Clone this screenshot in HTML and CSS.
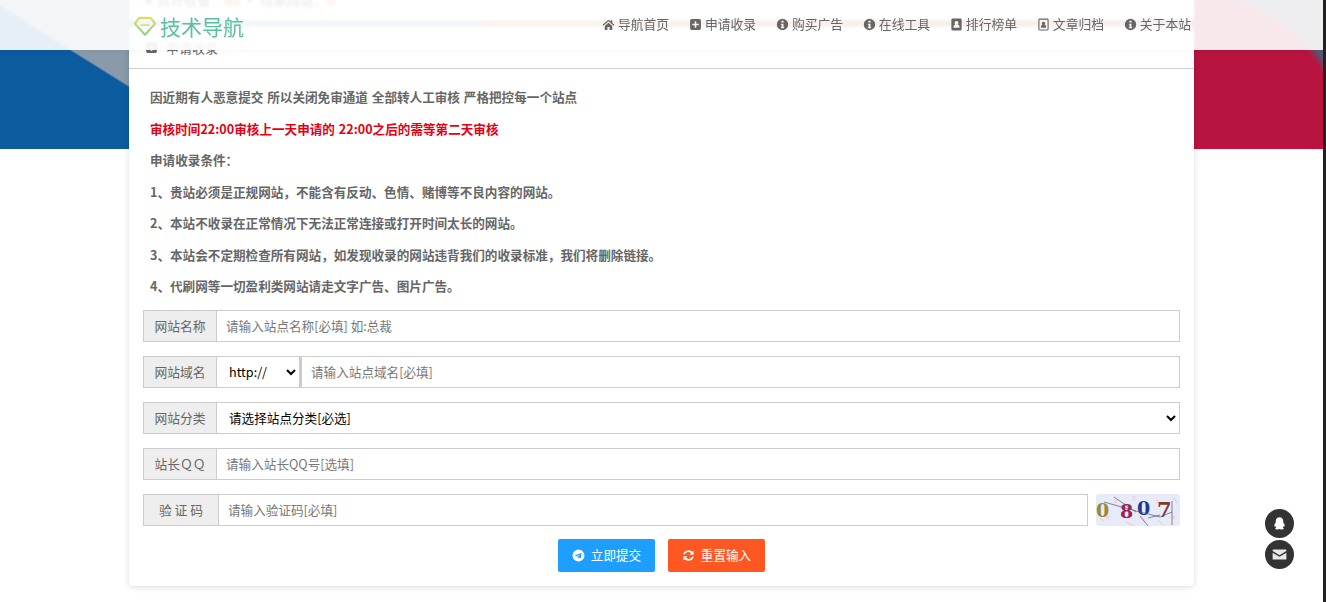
FILE: index.html
```html
<!DOCTYPE html>
<html lang="zh-CN">
<head>
<meta charset="utf-8">
<title>申请收录 - 技术导航</title>
<link rel="stylesheet" href="styles.css">
</head>
<body>
<header class="topbar">
  <a class="logo" href="#">
    <svg class="logo-mark" viewBox="0 0 24 22" width="24" height="21" aria-hidden="true">
      <defs><linearGradient id="gem" x1="0" y1="0" x2="0" y2="1"><stop offset="0" stop-color="#e3dc5e"/><stop offset="1" stop-color="#84d08f"/></linearGradient></defs>
      <path d="M6 2h12l4.600 6L12 19.600 1.400 8z" fill="none" stroke="url(#gem)" stroke-width="2.200" stroke-linejoin="round"/>
      <path d="M7 9.500h10" stroke="#d5d878" stroke-width="1.600"/>
    </svg>
    <span class="logo-text">技术导航</span>
  </a>
  <nav class="nav">
    <a class="nav-item" href="#"><svg class="ico" viewBox="0 0 24 24"><path d="M12 3 1 12.500l1.500 1.700L12 6l9.500 8.200 1.500-1.700-4-3.500V4h-3v2.400zM5 14.800V22h5v-5.500h4V22h5v-7.200L12 8.800z"/></svg>导航首页</a>
    <a class="nav-item" href="#"><svg class="ico" viewBox="0 0 24 24"><path fill-rule="evenodd" d="M5 2h14a3 3 0 0 1 3 3v14a3 3 0 0 1-3 3H5a3 3 0 0 1-3-3V5a3 3 0 0 1 3-3zm5.500 4v4.500H6v3h4.500V18h3v-4.500H18v-3h-4.500V6z"/></svg>申请收录</a>
    <a class="nav-item" href="#"><svg class="ico" viewBox="0 0 24 24"><path fill-rule="evenodd" d="M12 1.500a10.500 10.500 0 1 1 0 21 10.500 10.500 0 0 1 0-21zM10 5v3.500h4V5zM9 10.500v2h1.200V17H9v2h6v-2h-1.200v-6.500z"/></svg>购买广告</a>
    <a class="nav-item" href="#"><svg class="ico" viewBox="0 0 24 24"><path fill-rule="evenodd" d="M12 1.500a10.500 10.500 0 1 1 0 21 10.500 10.500 0 0 1 0-21zM10 5v3.500h4V5zM9 10.500v2h1.200V17H9v2h6v-2h-1.200v-6.500z"/></svg>在线工具</a>
    <a class="nav-item" href="#"><svg class="ico" viewBox="0 0 24 24"><path fill-rule="evenodd" d="M5 1h14a2.500 2.500 0 0 1 2.500 2.500v17A2.500 2.500 0 0 1 19 23H5a2.500 2.500 0 0 1-2.500-2.500v-17A2.500 2.500 0 0 1 5 1zm7 4.500a3.500 3.500 0 0 0-2 6.400c-2.200.5-3.500 2-3.500 4.600V18h11v-1.500c0-2.600-1.300-4.100-3.500-4.600a3.500 3.500 0 0 0-2-6.400z"/></svg>排行榜单</a>
    <a class="nav-item" href="#"><svg class="ico" viewBox="0 0 24 24"><path fill-rule="evenodd" d="M5 1h14a2.500 2.500 0 0 1 2.500 2.500v17A2.500 2.500 0 0 1 19 23H5a2.500 2.500 0 0 1-2.500-2.500v-17A2.500 2.500 0 0 1 5 1zm0 2a.5.5 0 0 0-.5.5v17a.5.5 0 0 0 .5.5h14a.5.5 0 0 0 .5-.5v-17A.5.5 0 0 0 19 3zm7 4a3 3 0 0 1 1.800 5.400c1.800.5 3 1.800 3 4.100V18H7.200v-1.500c0-2.300 1.200-3.600 3-4.100A3 3 0 0 1 12 7z"/></svg>文章归档</a>
    <a class="nav-item" href="#"><svg class="ico" viewBox="0 0 24 24"><path fill-rule="evenodd" d="M12 1.500a10.500 10.500 0 1 1 0 21 10.500 10.500 0 0 1 0-21zM10 5v3.500h4V5zM9 10.500v2h1.200V17H9v2h6v-2h-1.200v-6.500z"/></svg>关于本站</a>
  </nav>
</header>

<div class="hero"></div>

<main class="main">
  <section class="card stats">
    <svg class="ico stats-star" viewBox="0 0 24 24"><path d="m12 1.500 3.200 7 7.600.8-5.700 5.100 1.600 7.500L12 18.100l-6.700 3.800 1.600-7.500-5.700-5.100 7.600-.8z"/></svg>
    <span>共计收录：</span><b class="num">48</b><span> • 待审网站：</span><b class="num">0</b>
  </section>

  <section class="card panel">
    <h2 class="panel-head"><svg class="ico" viewBox="0 0 24 24"><path fill-rule="evenodd" d="M5 2h14a3 3 0 0 1 3 3v14a3 3 0 0 1-3 3H5a3 3 0 0 1-3-3V5a3 3 0 0 1 3-3zm5.500 4v4.500H6v3h4.500V18h3v-4.500H18v-3h-4.500V6z"/></svg>申请收录</h2>
    <div class="panel-body">
      <div class="notes">
        <p>因近期有人恶意提交 所以关闭免审通道 全部转人工审核 严格把控每一个站点</p>
        <p class="red">审核时间22:00审核上一天申请的 22:00之后的需等第二天审核</p>
        <p>申请收录条件：</p>
        <p>1、贵站必须是正规网站，不能含有反动、色情、赌博等不良内容的网站。</p>
        <p>2、本站不收录在正常情况下无法正常连接或打开时间太长的网站。</p>
        <p>3、本站会不定期检查所有网站，如发现收录的网站违背我们的收录标准，我们将删除链接。</p>
        <p>4、代刷网等一切盈利类网站请走文字广告、图片广告。</p>
      </div>
      <form class="form">
        <div class="row">
          <label class="addon">网站名称</label>
          <input class="field" type="text" placeholder="请输入站点名称[必填] 如:总裁">
        </div>
        <div class="row">
          <label class="addon">网站域名</label>
          <select class="field proto"><option>http://</option><option>https://</option></select>
          <input class="field" type="text" placeholder="请输入站点域名[必填]">
        </div>
        <div class="row">
          <label class="addon">网站分类</label>
          <select class="field"><option>请选择站点分类[必选]</option></select>
        </div>
        <div class="row">
          <label class="addon">站长ＱＱ</label>
          <input class="field" type="text" placeholder="请输入站长QQ号[选填]">
        </div>
        <div class="row captcha-row">
          <label class="addon addon-wide">验 证 码</label>
          <input class="field" type="text" placeholder="请输入验证码[必填]">
          <svg class="captcha" viewBox="0 0 84 32" width="84" height="32" role="img" aria-label="验证码">
            <g stroke="#f3cfe0" stroke-width="1.500" fill="none"><path d="M18 6l3 3m0-3l-3 3M36 2l4 4m0-4l-4 4M46 24l3 3m0-3l-3 3M60 6l3 3m0-3l-3 3M76 22l3 3m0-3l-3 3M10 22l3 3m0-3l-3 3M30 28l8 4"/></g>
            <g stroke="#c4d8c4" stroke-width="1" fill="none"><path d="M4 24l4 3M62 26l5 5M78 4l3 5"/></g>
            <g class="captcha-digits">
              <text class="d1" x="0" y="23">0</text>
              <text class="d2" x="24" y="24">8</text>
              <text class="d3" x="41" y="21">0</text>
              <text class="d4" x="61" y="23">7</text>
            </g>
            <g stroke="#5b5468" stroke-width=".7" fill="none"><path d="M8 8 40 17l24 6 12-5M18 3l22 15M44 22l8 10M76 7v24M52 24l12-3"/></g>
          </svg>
        </div>
        <div class="actions">
          <button class="btn btn-blue" type="button"><svg class="ico" viewBox="0 0 24 24"><path fill-rule="evenodd" d="M12 1a11 11 0 1 1 0 22 11 11 0 0 1 0-22zm6 6L5 12l3.800 1.400L16 9l-5.400 5.300V18l2.300-2.600 3 2.200z"/></svg>立即提交</button>
          <button class="btn btn-orange" type="button"><svg class="ico" viewBox="0 0 24 24"><path d="M21.500 3v7.500H14l2.800-2.800A7 7 0 0 0 5.500 9.500H2A10.500 10.500 0 0 1 19.300 5.200zM2.500 21v-7.500H10l-2.800 2.800a7 7 0 0 0 11.300-1.800H22A10.500 10.500 0 0 1 4.700 18.800z"/></svg>重置输入</button>
        </div>
      </form>
    </div>
  </section>
</main>

<aside class="fabs">
  <a class="fab" href="#"><svg viewBox="0 0 24 24" width="15" height="15"><path fill="#fff" d="M12 2c3.800 0 6 2.800 6 6.200v2c1.300 1.500 2.300 3.600 2.300 5.300 0 1.300-.6 1.700-1.700.4-.3 1-.8 1.900-1.500 2.500 1 .4 1.700 1 1.700 1.600 0 1-1.700 1.500-3.800 1.500-1.300 0-2.300-.3-3-.8-.7.500-1.700.8-3 .8-2.100 0-3.800-.5-3.800-1.500 0-.6.700-1.200 1.700-1.600-.7-.6-1.200-1.500-1.500-2.500-1.100 1.300-1.700.9-1.700-.4 0-1.700 1-3.800 2.300-5.300v-2C6 4.800 8.200 2 12 2z"/></svg></a>
  <a class="fab" href="#"><svg viewBox="0 0 24 24" width="15" height="15"><path fill="#e8e8e8" d="M2 4h20a1 1 0 0 1 1 1v1.500L12 13 1 6.500V5a1 1 0 0 1 1-1zM1 9l11 6.500L23 9v10a1 1 0 0 1-1 1H2a1 1 0 0 1-1-1z"/></svg></a>
</aside>
<div class="edge"></div>
</body>
</html>
```

FILE: styles.css
```css
* { box-sizing: border-box; }
html, body { margin: 0; height: 602px; overflow: hidden; }
body {
  background: #fff;
  color: #666;
  font: 12.6px/1.5 "Noto Sans CJK SC", "Liberation Sans", sans-serif;
  position: relative;
}
a { color: inherit; text-decoration: none; }

.topbar {
  position: fixed;
  top: 0; left: 0; right: 3px;
  height: 50px;
  z-index: 10;
  display: flex;
  align-items: center;
  justify-content: space-between;
  padding: 0 132px 0 133px;
  background: rgba(255, 255, 255, .9);
  backdrop-filter: blur(1.500px);
  box-shadow: 0 1px 6px rgba(0, 0, 0, .04);
}
.logo { display: flex; align-items: center; gap: 3px; margin-top: 3px; }
.logo-mark { display: block; margin-top: -1px; }
.logo-text { font-size: 21px; line-height: 22px; color: #5cc0a0; margin-top: -1px; }
.nav { display: flex; gap: 19.800px; margin-top: -2px; }
.nav-item { display: flex; align-items: center; gap: 3px; color: #666; font-size: 12.800px; line-height: 20px; white-space: nowrap; }
.ico { width: 13px; height: 13px; fill: currentColor; flex: none; }

.hero {
  position: absolute;
  top: 0; left: 0; right: 3px;
  height: 149px;
  background:
    linear-gradient(to bottom, transparent 146px, #c4103c 146px) right / 130px 149px no-repeat,
    radial-gradient(circle at 0 149px, #b8143f 0 150px, #56566f 158px) right / 130px 149px no-repeat,
    linear-gradient(212deg, #8a9aaa 0 73px, #0a5c9f 75px) left / 130px 149px no-repeat,
    linear-gradient(90deg, #87a5b9 0 36.400%, #cd9155 36.500% 46%, #af5f41 65%, #af5f41 80%, #907080 100%);
}
.main {
  position: relative;
  width: 1065px;
  margin: -27px 0 0 129px;
  display: flex;
  flex-direction: column;
  gap: 7px;
}
.card {
  background: #fff;
  border-radius: 4px;
  box-shadow: 0 1px 6px rgba(0, 0, 0, .14);
}
.stats {
  height: 47px;
  padding: 16px 13px 0;
  display: flex;
  align-items: flex-start;
  font-weight: 700;
  font-size: 13.400px;
  line-height: 22px;
  white-space: pre;
}
.stats-star { width: 13px; height: 13px; margin: 4px 2px 0 0; }
.num { color: #ff5722; }

.panel-head {
  margin: 0;
  height: 42px;
  padding: 0 16px;
  display: flex;
  align-items: center;
  gap: 8px;
  font-size: 13px;
  font-weight: 400;
  color: #666;
  line-height: 20px;
  border-bottom: 1px solid #ccc;
}
.panel-body { padding: 12px 14px 14px; }
.notes { padding: 0 7px; }
.notes p {
  margin: 0;
  font-weight: 700;
  font-size: 12.600px;
  line-height: 31.500px;
  word-spacing: 1px;
  color: #666;
}
.notes .red { color: #e60012; }

.form { display: flex; flex-direction: column; gap: 14px; margin-top: 8px; }
.row { display: flex; height: 32px; }
.addon {
  flex: none;
  width: 73px;
  display: flex;
  align-items: center;
  justify-content: center;
  background: #eee;
  border: 1px solid #ccc;
  border-right: 0;
  color: #666;
  font-size: 12.800px;
  white-space: pre;
}
.addon-wide { width: 75px; }
.field {
  flex: 1;
  min-width: 0;
  height: 32px;
  padding: 0 9px;
  border: 1px solid #ccc;
  background: #fff;
  color: #222;
  font: inherit;
  outline: 0;
}
.field::placeholder { color: #777; opacity: 1; }
select.field { padding-left: 8px; color: #000; }
.proto { flex: none; width: 85px; border-right-width: 2px; }
.captcha-row .field { margin-right: 8px; }
.captcha { flex: none; background: #e7ebf9; border-radius: 3px; }
.captcha-digits text { font: 700 19px "DejaVu Serif", serif; }
.d1 { fill: #968a33; }
.d2 { fill: #a31c52; }
.d3 { fill: #1c3a8f; }
.captcha-digits .d4 { fill: #7d3a30; font-size: 21px; }

.actions { display: flex; justify-content: center; gap: 13px; margin-top: -1px; }
.btn {
  width: 97px;
  height: 33px;
  display: flex;
  align-items: center;
  justify-content: center;
  gap: 6px;
  border: 0;
  border-radius: 2px;
  color: #fff;
  font: inherit;
}
.btn-blue { background: #1e9fff; }
.btn-orange { background: #ff5722; }

.fabs {
  position: fixed;
  left: 1265px;
  top: 509px;
  display: flex;
  flex-direction: column;
  gap: 2px;
  z-index: 11;
}
.fab {
  width: 29px;
  height: 29px;
  border-radius: 50%;
  background: #333;
  display: flex;
  align-items: center;
  justify-content: center;
}
.edge {
  position: fixed;
  top: 0; right: 0; bottom: 0;
  width: 3px;
  background: #222;
  z-index: 12;
}
```
